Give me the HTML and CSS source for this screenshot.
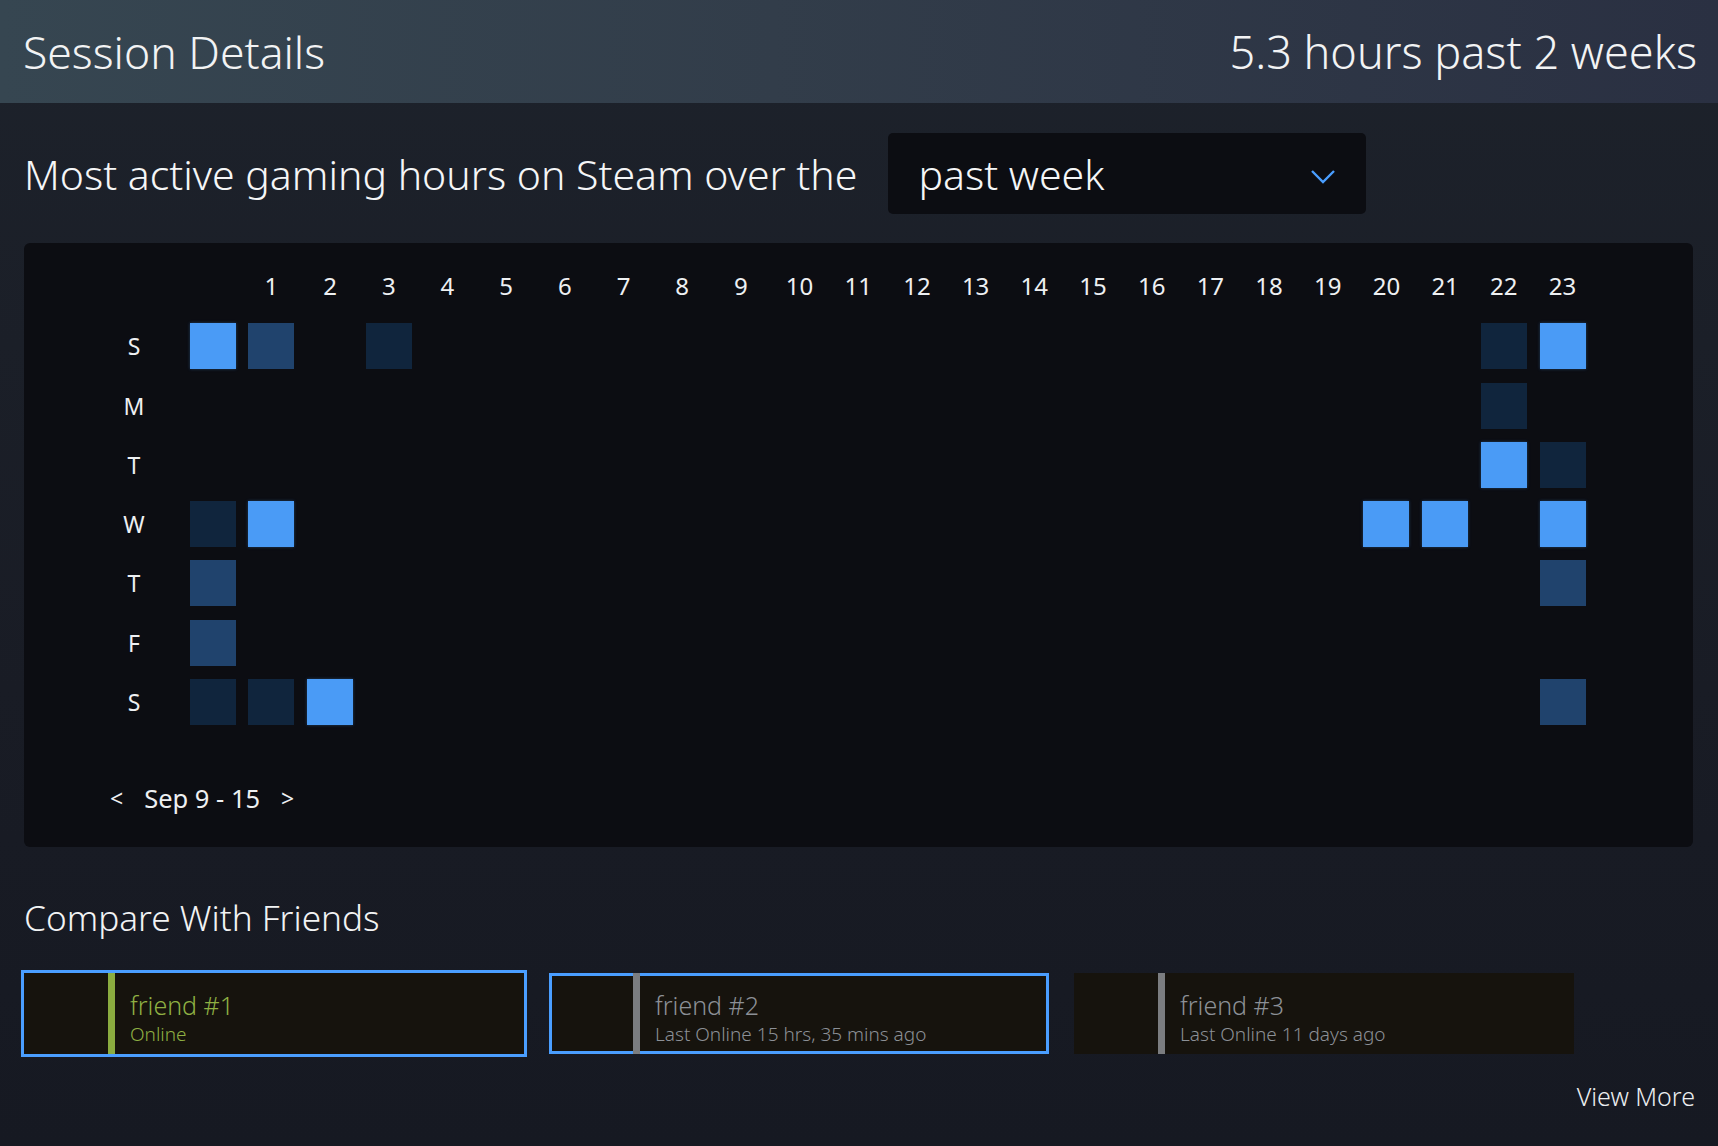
FILE: index.html
```html
<!DOCTYPE html>
<html lang="en">
<head>
<meta charset="utf-8">
<title>Session Details</title>
<link rel="stylesheet" href="styles.css">
</head>
<body>
<header class="top">
  <h1 class="title">Session Details</h1>
  <div class="total">5.3 hours past 2 weeks</div>
</header>
<main class="main">
  <div class="filter">
    <span class="filter-label">Most active gaming hours on Steam over the</span>
    <div class="select">
      <span>past week</span>
      <svg class="chev" width="26" height="16" viewBox="0 0 26 16"><path d="M2 2 L13 13 L24 2" fill="none" stroke="#4a9eff" stroke-width="2.4"/></svg>
    </div>
  </div>

  <section class="panel">
    <div class="grid">
      <div class="hl"></div><div class="hl"></div><div class="hl">1</div><div class="hl">2</div><div class="hl">3</div><div class="hl">4</div><div class="hl">5</div><div class="hl">6</div><div class="hl">7</div><div class="hl">8</div><div class="hl">9</div><div class="hl">10</div><div class="hl">11</div><div class="hl">12</div><div class="hl">13</div><div class="hl">14</div><div class="hl">15</div><div class="hl">16</div><div class="hl">17</div><div class="hl">18</div><div class="hl">19</div><div class="hl">20</div><div class="hl">21</div><div class="hl">22</div><div class="hl">23</div>

      <div class="dl">S</div><div class="c l3"></div><div class="c l2"></div><div class="c"></div><div class="c l1"></div><div class="c"></div><div class="c"></div><div class="c"></div><div class="c"></div><div class="c"></div><div class="c"></div><div class="c"></div><div class="c"></div><div class="c"></div><div class="c"></div><div class="c"></div><div class="c"></div><div class="c"></div><div class="c"></div><div class="c"></div><div class="c"></div><div class="c"></div><div class="c"></div><div class="c l1"></div><div class="c l3"></div>

      <div class="dl">M</div><div class="c"></div><div class="c"></div><div class="c"></div><div class="c"></div><div class="c"></div><div class="c"></div><div class="c"></div><div class="c"></div><div class="c"></div><div class="c"></div><div class="c"></div><div class="c"></div><div class="c"></div><div class="c"></div><div class="c"></div><div class="c"></div><div class="c"></div><div class="c"></div><div class="c"></div><div class="c"></div><div class="c"></div><div class="c"></div><div class="c l1"></div><div class="c"></div>

      <div class="dl">T</div><div class="c"></div><div class="c"></div><div class="c"></div><div class="c"></div><div class="c"></div><div class="c"></div><div class="c"></div><div class="c"></div><div class="c"></div><div class="c"></div><div class="c"></div><div class="c"></div><div class="c"></div><div class="c"></div><div class="c"></div><div class="c"></div><div class="c"></div><div class="c"></div><div class="c"></div><div class="c"></div><div class="c"></div><div class="c"></div><div class="c l3"></div><div class="c l1"></div>

      <div class="dl">W</div><div class="c l1"></div><div class="c l3"></div><div class="c"></div><div class="c"></div><div class="c"></div><div class="c"></div><div class="c"></div><div class="c"></div><div class="c"></div><div class="c"></div><div class="c"></div><div class="c"></div><div class="c"></div><div class="c"></div><div class="c"></div><div class="c"></div><div class="c"></div><div class="c"></div><div class="c"></div><div class="c"></div><div class="c l3"></div><div class="c l3"></div><div class="c"></div><div class="c l3"></div>

      <div class="dl">T</div><div class="c l2"></div><div class="c"></div><div class="c"></div><div class="c"></div><div class="c"></div><div class="c"></div><div class="c"></div><div class="c"></div><div class="c"></div><div class="c"></div><div class="c"></div><div class="c"></div><div class="c"></div><div class="c"></div><div class="c"></div><div class="c"></div><div class="c"></div><div class="c"></div><div class="c"></div><div class="c"></div><div class="c"></div><div class="c"></div><div class="c"></div><div class="c l2"></div>

      <div class="dl">F</div><div class="c l2"></div><div class="c"></div><div class="c"></div><div class="c"></div><div class="c"></div><div class="c"></div><div class="c"></div><div class="c"></div><div class="c"></div><div class="c"></div><div class="c"></div><div class="c"></div><div class="c"></div><div class="c"></div><div class="c"></div><div class="c"></div><div class="c"></div><div class="c"></div><div class="c"></div><div class="c"></div><div class="c"></div><div class="c"></div><div class="c"></div><div class="c"></div>

      <div class="dl">S</div><div class="c l1"></div><div class="c l1"></div><div class="c l3"></div><div class="c"></div><div class="c"></div><div class="c"></div><div class="c"></div><div class="c"></div><div class="c"></div><div class="c"></div><div class="c"></div><div class="c"></div><div class="c"></div><div class="c"></div><div class="c"></div><div class="c"></div><div class="c"></div><div class="c"></div><div class="c"></div><div class="c"></div><div class="c"></div><div class="c"></div><div class="c"></div><div class="c l2"></div>
    </div>
    <div class="weeknav">
      <span class="arrow">&lt;</span>
      <span class="range">Sep 9 - 15</span>
      <span class="arrow">&gt;</span>
    </div>
  </section>

  <h2 class="compare">Compare With Friends</h2>
  <div class="friends">
    <div class="friend focus online">
      <div class="avatar"></div><div class="bar"></div>
      <div class="info"><div class="name">friend #1</div><div class="status">Online</div></div>
    </div>
    <div class="friend bordered">
      <div class="avatar"></div><div class="bar"></div>
      <div class="info"><div class="name">friend #2</div><div class="status">Last Online 15 hrs, 35 mins ago</div></div>
    </div>
    <div class="friend">
      <div class="avatar"></div><div class="bar"></div>
      <div class="info"><div class="name">friend #3</div><div class="status">Last Online 11 days ago</div></div>
    </div>
  </div>
  <div class="more-row"><span class="more">View More</span></div>
</main>
</body>
</html>
```
FILE: styles.css
```css
* { box-sizing: border-box; }
html, body { margin: 0; padding: 0; }
body {
  width: 1718px;
  height: 1146px;
  overflow: hidden;
  background: linear-gradient(180deg, #1d222b 0%, #191c25 60%, #161922 100%);
  font-family: "Noto Sans", "Open Sans", sans-serif;
  color: #ffffff;
}
.top {
  height: 103px;
  display: flex;
  align-items: center;
  justify-content: space-between;
  padding: 0 21px 0 23px;
  background: linear-gradient(90deg, #364651 0%, #323d4a 45%, #2a3042 100%);
}
.title {
  margin: 0;
  font-size: 44.5px;
  font-weight: 300;
  color: #f2f3f4;
}
.total {
  font-size: 45px;
  font-weight: 300;
  color: #f2f3f4;
}
.main { padding: 0 23px 0 24px; }
.filter {
  margin-top: 30px;
  display: flex;
  align-items: center;
  height: 81px;
}
.filter-label {
  font-size: 41px;
  font-weight: 300;
  color: #f5f6f7;
}
.select {
  margin-left: 31px;
  width: 478px;
  height: 81px;
  border-radius: 5px;
  background: #0c0d12;
  display: flex;
  align-items: center;
  justify-content: space-between;
  padding: 0 30px 0 30px;
  font-size: 41px;
  font-weight: 300;
  color: #f5f6f7;
}
.chev { margin-top: 6px; }
.panel {
  margin-top: 29px;
  width: 1669px;
  height: 604px;
  border-radius: 6px;
  background: #0c0d12;
  padding: 17px 0 0 61px;
}
.grid {
  display: grid;
  grid-template-columns: 92px repeat(24, 46px);
  grid-template-rows: 50px repeat(7, 46px);
  column-gap: 12.7px;
  row-gap: 13.3px;
}
.hl {
  display: flex;
  align-items: center;
  justify-content: center;
  font-size: 24px;
  color: #eef0f2;
}
.dl {
  display: flex;
  align-items: center;
  justify-content: center;
  padding-left: 6px;
  font-size: 23px;
  color: #eef0f2;
}
.c { width: 46px; height: 46px; }
.l1 { background: #10253d; }
.l2 { background: #20436d; }
.l3 { background: #4a9bf6; box-shadow: 0 0 3px rgba(74, 155, 246, 0.35); }
.weeknav {
  margin-top: 59px;
  padding-left: 25px;
  height: 28px;
  display: flex;
  align-items: center;
  font-size: 25.5px;
  color: #eef0f2;
}
.arrow { font-size: 23px; }
.range { margin: 0 21px 0 21px; }
.compare {
  margin: 48px 0 0;
  height: 44px;
  line-height: 44px;
  font-size: 35.2px;
  font-weight: 300;
  color: #f2f3f4;
}
.friends {
  margin-top: 34px;
  display: flex;
  gap: 25px;
}
.friend {
  width: 500px;
  height: 81px;
  background: #16130d;
  display: flex;
}
.friend.focus { outline: 3px solid #4a9eff; }
.friend.bordered { box-shadow: inset 0 0 0 3px #4a9eff; }
.avatar { width: 84px; }
.bar { width: 7px; background: #7b7d80; }
.online .bar { background: #8bac3f; }
.info {
  padding: 17px 0 0 15px;
  color: #8c9096;
}
.name { font-size: 25px; line-height: 30px; font-weight: 300; }
.status { font-size: 19px; line-height: 26px; font-weight: 300; margin-top: 1px; }
.online .info { color: #8fb043; }
.more-row {
  margin-top: 25px;
  display: flex;
  justify-content: flex-end;
}
.more {
  font-size: 25px;
  font-weight: 300;
  color: #eceef0;
}
```
